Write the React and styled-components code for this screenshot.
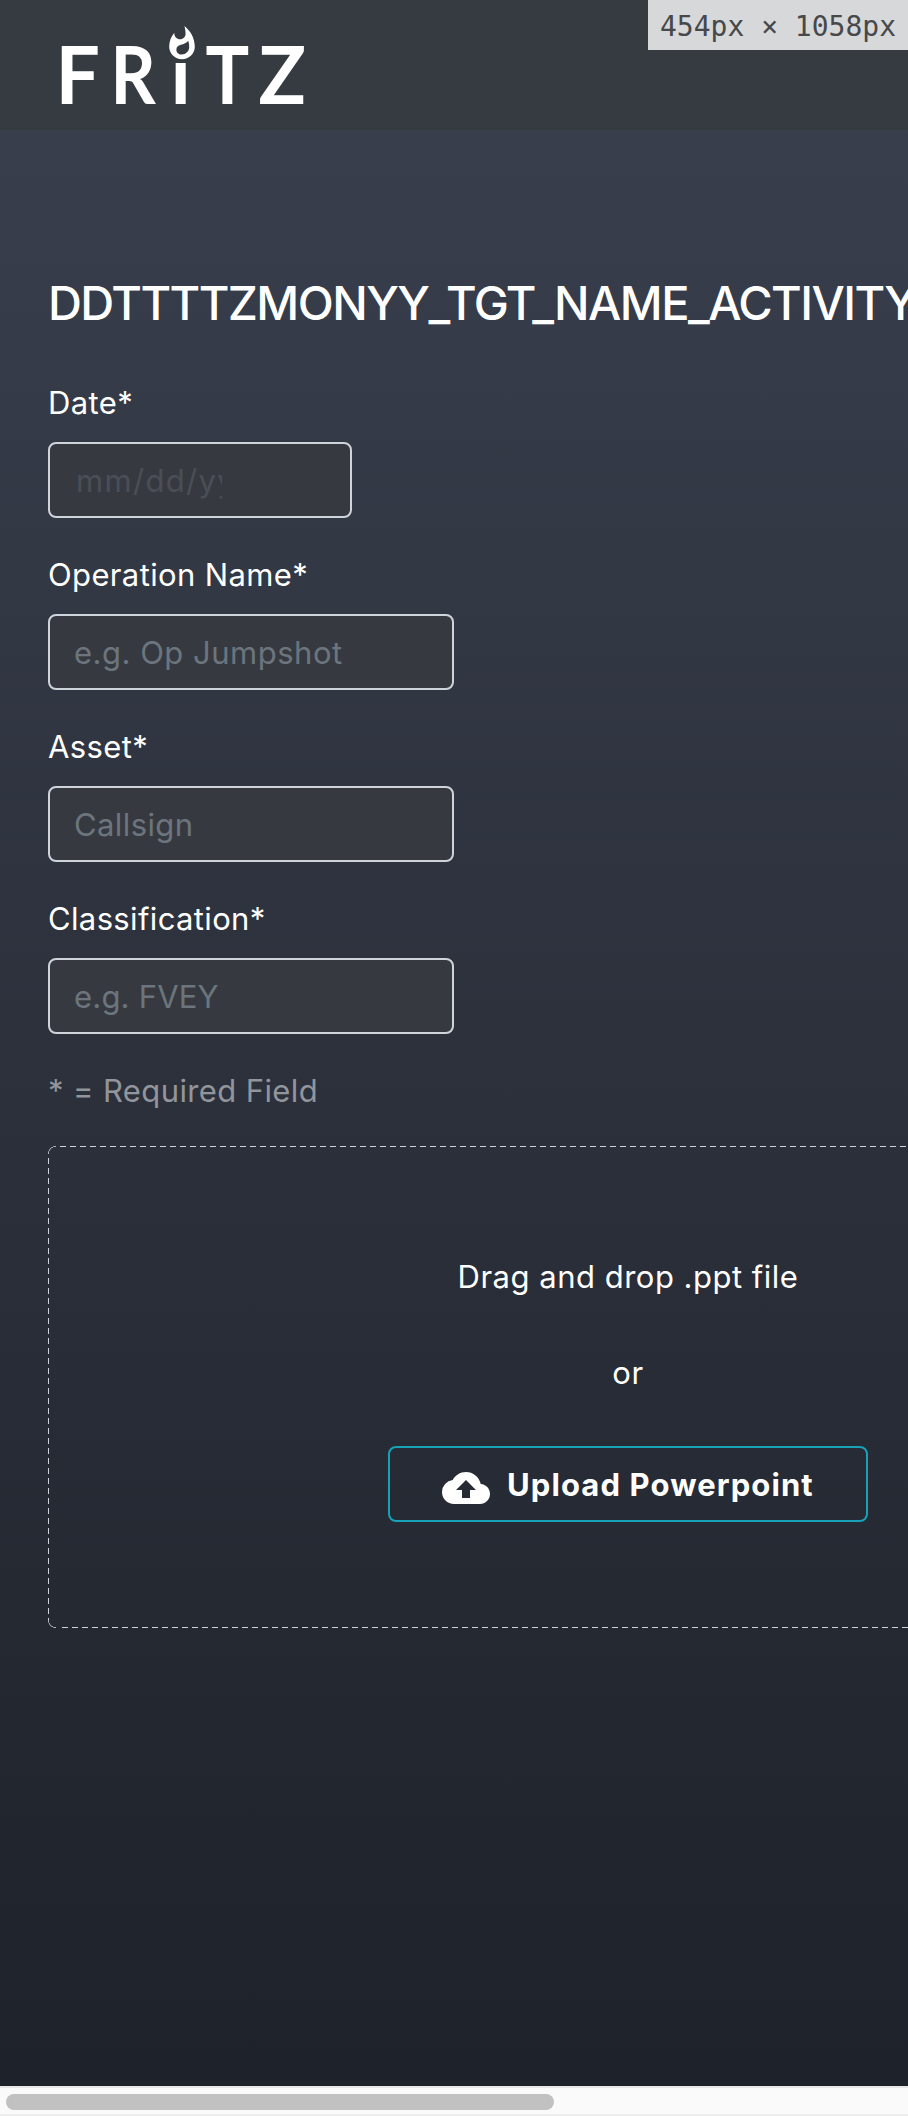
import React from "react";
import styled, { createGlobalStyle } from "styled-components";
import { MdCloudUpload } from "react-icons/md";

const Global = createGlobalStyle`
  *, *::before, *::after { box-sizing: border-box; }
  html, body { margin: 0; padding: 0; overflow: hidden; }
  body {
    font-family: Inter, "Liberation Sans", sans-serif;
    font-size: 31px;
    line-height: 48px;
    color: #fff;
  }
`;

const Window = styled.div`
  position: relative;
  display: flex;
  flex-direction: column;
  width: 908px;
  height: 2116px;
  overflow: hidden;
`;

const SizeBadge = styled.div`
  position: absolute;
  top: 0;
  right: 0;
  width: 260px;
  height: 50px;
  padding-left: 12px;
  background: #d7d8da;
  color: #46484a;
  font: 28px/54px "DejaVu Sans Mono", monospace;
  white-space: pre;
`;

const Page = styled.div`
  flex: 1;
  min-height: 0;
  background: linear-gradient(#3a404e, #1e222a);
  overflow: hidden;
`;

const Header = styled.header`
  height: 130px;
  padding-left: 48px;
  background: #363a41;
`;

const Logo = styled.svg`
  display: block;
  width: 272px;
  height: 130px;
  fill: #fff;
  font: 700 80px Lato, sans-serif;
`;

const Main = styled.main`
  display: flex;
  flex-direction: column;
  align-items: flex-start;
  padding: 144px 48px 0;
`;

const Title = styled.h1`
  margin: 0 0 47px;
  font-size: 47px;
  line-height: 58px;
  font-weight: 500;
  letter-spacing: -1.56px;
  white-space: nowrap;
`;

const Field = styled.div`
  display: flex;
  flex-direction: column;
  gap: 15px;
  margin-bottom: 33px;
`;

const Label = styled.label`
  letter-spacing: 0.36px;
`;

const Input = styled.input`
  width: 406px;
  height: 76px;
  padding: 0 24px;
  border: 2px solid #ced4da;
  border-radius: 8px;
  background: #363a40;
  color: #fff;
  font: inherit;
  letter-spacing: ${(p) => p.$spacing};
  outline: none;
  &::placeholder { color: #6c757d; opacity: 1; }
`;

const DateBox = styled.div`
  display: flex;
  align-items: center;
  width: 304px;
  height: 76px;
  padding: 1px 0 0 26px;
  border: 2px solid #ced4da;
  border-radius: 8px;
  background: #363a40;
`;

const DateHint = styled.span`
  width: 146px;
  overflow: hidden;
  white-space: nowrap;
  color: #4a4e56;
  letter-spacing: 1.3px;
`;

const Note = styled.p`
  margin: 0 0 31px;
  color: #92959b;
  letter-spacing: 0.38px;
`;

const dash = "#ced4da 0 6px, transparent 6px 10px";
const ring = "transparent 7px, #aeb3ba 7.4px 7.8px, transparent 8.2px";

const DropZone = styled.section`
  display: flex;
  flex-direction: column;
  align-items: center;
  width: 1160px;
  height: 482px;
  padding-top: 107px;
  background:
    repeating-linear-gradient(90deg, ${dash}) 12px 0 / 1140px 1px no-repeat,
    repeating-linear-gradient(90deg, ${dash}) 14px 481px / 1138px 1px no-repeat,
    repeating-linear-gradient(180deg, ${dash}) 0 12px / 1px 462px no-repeat,
    radial-gradient(circle at 8px 8px, ${ring}) 0 0 / 8px 8px no-repeat,
    radial-gradient(circle at 8px 0, ${ring}) 0 474px / 8px 8px no-repeat;
`;

const DropText = styled.p`
  margin: 0 0 ${(p) => p.$gap};
  letter-spacing: 0.5px;
`;

const UploadButton = styled.button`
  display: flex;
  align-items: center;
  width: 480px;
  height: 76px;
  padding: 0 0 0 52px;
  border: 2px solid #17a2b8;
  border-radius: 8px;
  background: transparent;
  color: #fff;
  font: inherit;
  font-weight: 700;
  letter-spacing: 1.1px;
  white-space: nowrap;
  svg { flex: none; width: 48px; height: 48px; margin: 7px 17px 0 0; }
`;

const ButtonText = styled.span`
  padding-top: 1px;
`;

const ScrollTrack = styled.div`
  flex: none;
  height: 30px;
  padding: 6px;
  border-top: 2px solid #e8e8e8;
  border-bottom: 2px solid #ededed;
  background: #fafafa;
`;

const ScrollThumb = styled.div`
  width: 548px;
  height: 16px;
  border-radius: 8px;
  background: #c1c1c1;
`;

const FIELDS = [
  { id: "operation", label: "Operation Name*", hint: "e.g. Op Jumpshot", spacing: "0.5px" },
  { id: "asset", label: "Asset*", hint: "Callsign", spacing: "0.4px" },
  { id: "classification", label: "Classification*", hint: "e.g. FVEY", spacing: "0.2px" },
];

const LETTERS = [
  { char: "F", x: 7.5, stretch: 0.98 },
  { char: "R", x: 62.5, stretch: 0.88 },
  { char: "ı", x: 122.5, stretch: 1 },
  { char: "T", x: 157.5, stretch: 0.91 },
  { char: "Z", x: 210.5, stretch: 0.98 },
];

function FritzLogo() {
  return (
    <Logo viewBox="0 0 272 130" role="img" aria-label="Fritz">
      {LETTERS.map((l) => (
        <text key={l.char} transform={`translate(${l.x} 104) scale(${l.stretch} 1)`}>
          {l.char}
        </text>
      ))}
      <path
        transform="translate(114.8 24.9) scale(1.6 1.56)"
        d="M13.5.67s.74 2.65.74 4.8c0 2.06-1.35 3.73-3.41 3.73-2.07 0-3.63-1.67-3.63-3.73l.03-.36C5.21 7.51 4 10.62 4 14c0 4.42 3.58 8 8 8s8-3.58 8-8C20 8.61 17.41 3.8 13.5.67zM11.71 19c-1.78 0-3.22-1.4-3.22-3.14 0-1.62 1.05-2.76 2.81-3.12 1.77-.36 3.6-1.21 4.62-2.58.39 1.29.59 2.65.59 4.04 0 2.65-2.15 4.8-4.8 4.8z"
      />
    </Logo>
  );
}

export default function App() {
  return (
    <Window>
      <Global />
      <Page>
        <Header>
          <FritzLogo />
        </Header>
        <Main>
          <Title>DDTTTTZMONYY_TGT_NAME_ACTIVITY</Title>
          <Field>
            <Label>Date*</Label>
            <DateBox>
              <DateHint>mm/dd/yy</DateHint>
            </DateBox>
          </Field>
          {FIELDS.map((f) => (
            <Field key={f.id}>
              <Label htmlFor={f.id}>{f.label}</Label>
              <Input id={f.id} placeholder={f.hint} $spacing={f.spacing} />
            </Field>
          ))}
          <Note>* = Required Field</Note>
          <DropZone>
            <DropText $gap="48px">Drag and drop .ppt file</DropText>
            <DropText $gap="49px">or</DropText>
            <UploadButton type="button">
              <MdCloudUpload />
              <ButtonText>Upload Powerpoint</ButtonText>
            </UploadButton>
          </DropZone>
        </Main>
      </Page>
      <ScrollTrack>
        <ScrollThumb />
      </ScrollTrack>
      <SizeBadge>454px × 1058px</SizeBadge>
    </Window>
  );
}
